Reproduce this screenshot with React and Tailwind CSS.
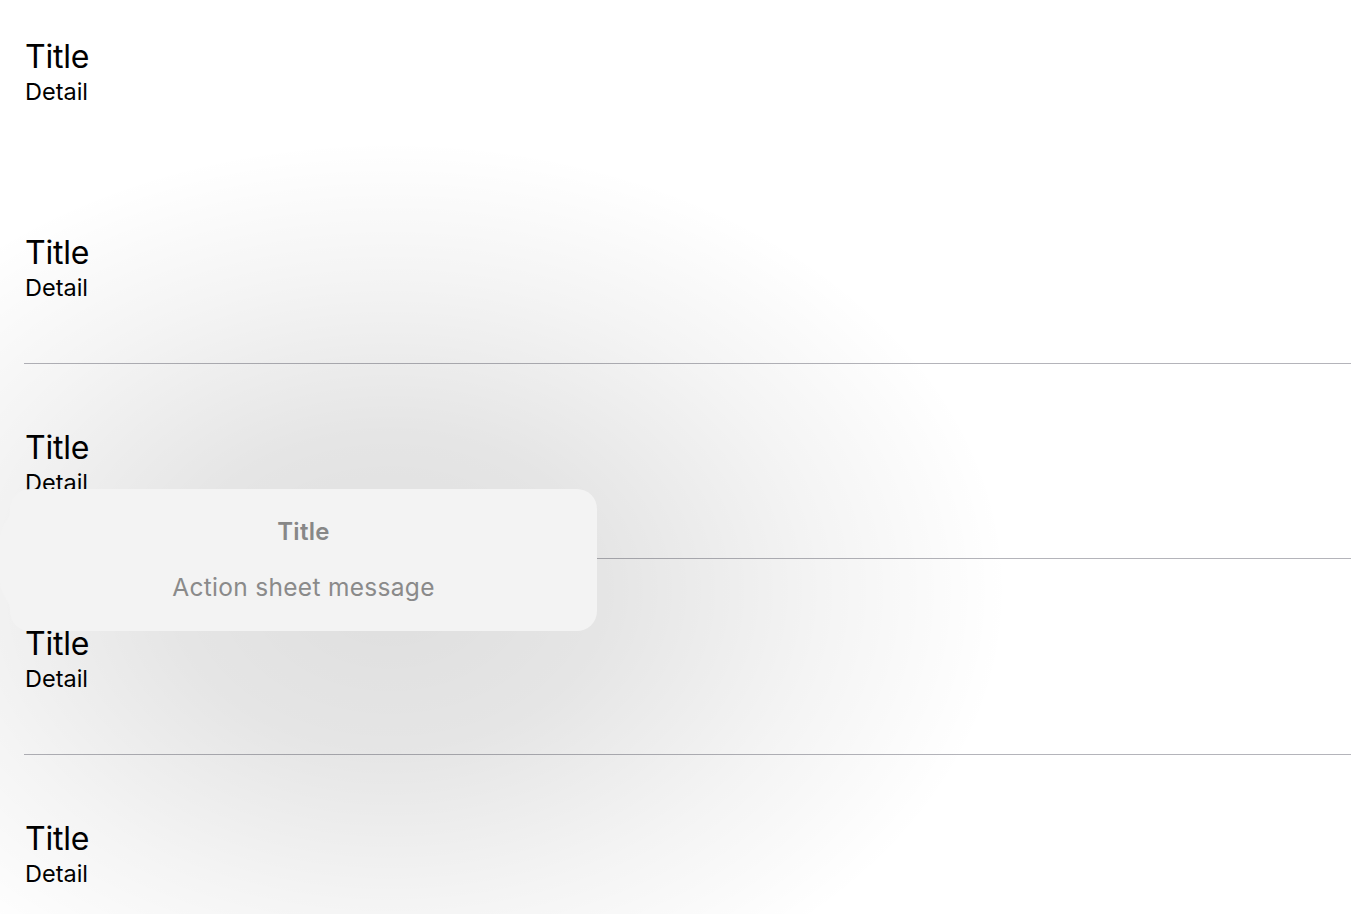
const ROWS = [1, 2, 3, 4, 5];

function Row({ last, divider }) {
  return (
    <div className="relative h-[195.5px] flex flex-col justify-center pl-[25px]">
      <div className="text-[32px] leading-[36px] text-black tracking-[-0.2px]">Title</div>
      <div className="mt-[3px] text-[23.5px] leading-[27px] text-black">Detail</div>
      {divider && !last && <div className="absolute left-[24px] right-0 bottom-[2px] h-px bg-[#b4b4ba]" />}
    </div>
  );
}

function Popover() {
  return (
    <div className="absolute left-0 top-[489px] flex items-center">
      {/* arrow */}
      <svg width="11" height="112" viewBox="0 0 11 112" className="-mr-px">
        <path d="M11 0 C11 18, 0 18, 0 36 L0 76 C0 94, 11 94, 11 112 Z" fill="#f3f3f3" />
      </svg>
      <div className="w-[587px] h-[142px] rounded-[20px] bg-[#f3f3f3] flex flex-col items-center pt-[28px]">
        <div className="text-[24px] leading-[30px] font-semibold tracking-[0.3px] text-[#878787]">Title</div>
        <div className="mt-[25px] text-[24.5px] leading-[30px] tracking-[0.3px] text-[#8a8a8a]">Action sheet message</div>
      </div>
    </div>
  );
}

export default function App() {
  return (
    <div className="relative w-[1351px] h-[914px] overflow-hidden bg-white font-['Inter',sans-serif]">
      <div className="-mt-[25.5px]">
        {ROWS.map((r, i) => (
          <Row key={r} divider={i > 0} last={i === ROWS.length - 1} />
        ))}
      </div>
      {/* dimming shadow behind the popover */}
      <div className="absolute inset-0 pointer-events-none bg-[radial-gradient(ellipse_620px_450px_at_390px_590px,rgba(0,0,0,0.13)_0%,rgba(0,0,0,0.1)_35%,rgba(0,0,0,0.045)_70%,rgba(0,0,0,0)_100%)]" />
      <Popover />
    </div>
  );
}
